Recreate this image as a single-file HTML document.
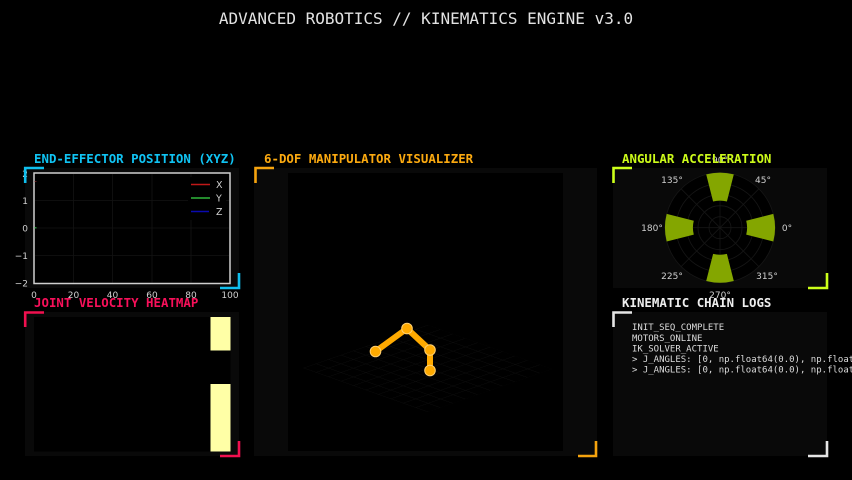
<!DOCTYPE html>
<html><head><meta charset="utf-8"><style>
html,body{margin:0;padding:0;background:#000;width:852px;height:480px;overflow:hidden}
svg{position:absolute;left:0;top:0;display:block;filter:blur(.3px)}
text{font-family:"DejaVu Sans",sans-serif}
.m{font-family:"DejaVu Sans Mono","Liberation Mono",monospace}
.h{font-family:"DejaVu Sans Mono","Liberation Mono",monospace;font-weight:700;font-size:12.42px}
.l{font-size:9px;fill:#dcdcdc;font-family:"DejaVu Sans Mono","Liberation Mono",monospace}
</style></head><body>
<svg width="852" height="480" viewBox="0 0 852 480" xmlns="http://www.w3.org/2000/svg">
<defs>
<pattern id="g" width="10" height="10" patternUnits="userSpaceOnUse"><path d="M0 0H10M0 0V10" stroke="#0e0e0e" stroke-width="1" fill="none"/></pattern>
</defs>
<rect width="852" height="480" fill="#000"/>
<text x="426" y="24" text-anchor="middle" class="m" font-size="16" fill="#e2e2e2">ADVANCED ROBOTICS // KINEMATICS ENGINE v3.0</text>

<!-- panels -->
<rect x="25" y="168" width="214" height="120" fill="#090909"/>
<rect x="25" y="312" width="214" height="144" fill="#090909"/>
<rect x="254" y="168" width="343" height="288" fill="#090909"/>
<rect x="613" y="168" width="214" height="120" fill="#090909"/>
<rect x="613" y="312" width="214" height="144" fill="#090909"/>

<!-- position chart -->
<rect x="34" y="173" width="196" height="110.500" fill="#000"/>
<g stroke="#131313" stroke-width="0.8">
<path d="M73.500 174V283M112.500 174V283M152 174V283M191 174V283"/>
<path d="M35 200.500H229M35 228H229M35 255.500H229"/>
</g>
<rect x="34" y="173" width="196" height="110.500" fill="none" stroke="#cfcfcf" stroke-width="1.500"/>
<rect x="34.500" y="227" width="2" height="1.500" fill="#2a8a3a"/>
<rect x="34.500" y="181" width="2" height="1" fill="#602020"/>
<g text-anchor="middle" style="font-size:9px;fill:#d0d0d0">
<text x="34" y="298">0</text><text x="73.500" y="298">20</text><text x="112.500" y="298">40</text><text x="152" y="298">60</text><text x="191" y="298">80</text><text x="230" y="298">100</text>
</g>
<g style="font-size:9px;fill:#d0d0d0" text-anchor="end">
<text x="28" y="177">2</text><text x="28" y="204">1</text><text x="28" y="231.500">0</text><text x="28" y="259">−1</text><text x="28" y="286.500">−2</text>
</g>
<rect x="188" y="177" width="38" height="43" fill="#000"/>
<path d="M191 184.500H210" stroke="#c01818" stroke-width="1.600"/>
<path d="M191 198H210" stroke="#2fb83a" stroke-width="1.600"/>
<path d="M191 211.500H209" stroke="#0a0ab0" stroke-width="1.600"/>
<g style="font-size:9.500px;fill:#d0d0d0"><text x="216" y="188">X</text><text x="216" y="201.500">Y</text><text x="216" y="215">Z</text></g>

<!-- heatmap -->
<rect x="34" y="317" width="196.500" height="134.500" fill="#000"/>
<rect x="210.500" y="317" width="20" height="33.500" fill="#ffffa6"/>
<rect x="210.500" y="384" width="20" height="67.500" fill="#ffffa6"/>

<!-- center viewport -->
<rect x="288" y="173" width="275" height="278" fill="#000"/>
<g transform="matrix(1.245,-0.43,1.245,0.44,303,368)"><rect x="0" y="0" width="100" height="100" fill="url(#g)"/></g>
<path d="M375.500 351.500L407 328.500L430 350V370.500" fill="none" stroke="#ffaa00" stroke-width="6" stroke-linejoin="round"/>
<g fill="#ffaa00" stroke="#ffcf70" stroke-width="1">
<circle cx="375.500" cy="351.500" r="5.300"/><circle cx="407" cy="328.500" r="5.300"/><circle cx="430" cy="350" r="5.300"/><circle cx="430" cy="370.500" r="5.300"/>
</g>

<!-- polar -->
<g transform="translate(720,227.700)">
<circle r="55" fill="#000"/>
<g fill="none" stroke="#161616" stroke-width="0.8">
<circle r="11"/><circle r="22"/><circle r="33"/><circle r="44"/><circle r="55"/>
<path d="M-55 0H55M0 -55V55M-38.900 -38.900L38.900 38.900M-38.900 38.900L38.900 -38.900"/>
</g>
<g fill="#84a600">
<path d="M26.200 -6.900L53.300 -13.800A55 55 0 0 1 53.300 13.800L26.200 6.900A27 27 0 0 0 26.200 -6.900Z"/>
<path transform="rotate(90)" d="M26.200 -6.900L53.300 -13.800A55 55 0 0 1 53.300 13.800L26.200 6.900A27 27 0 0 0 26.200 -6.900Z"/>
<path transform="rotate(180)" d="M26.200 -6.900L53.300 -13.800A55 55 0 0 1 53.300 13.800L26.200 6.900A27 27 0 0 0 26.200 -6.900Z"/>
<path transform="rotate(270)" d="M26.200 -6.900L53.300 -13.800A55 55 0 0 1 53.300 13.800L26.200 6.900A27 27 0 0 0 26.200 -6.900Z"/>
</g>
</g>
<g style="font-size:9px;fill:#d0d0d0" text-anchor="middle">
<text x="720" y="163">90°</text><text x="763" y="183">45°</text><text x="672" y="183">135°</text>
<text x="787" y="231">0°</text><text x="652" y="231">180°</text>
<text x="672" y="279">225°</text><text x="767" y="279">315°</text><text x="720" y="298">270°</text>
</g>

<!-- logs -->
<text class="l" x="632" y="330">INIT_SEQ_COMPLETE</text>
<text class="l" x="632" y="341">MOTORS_ONLINE</text>
<text class="l" x="632" y="351.500">IK_SOLVER_ACTIVE</text>
<text class="l" x="632" y="362">&gt; J_ANGLES: [0, np.float64(0.0), np.float64(0.0), np.float64(0.0)]</text>
<text class="l" x="632" y="372.500">&gt; J_ANGLES: [0, np.float64(0.0), np.float64(0.0), np.float64(0.0)]</text>

<!-- headings -->
<text class="h" x="34" y="163" fill="#10c4f4">END-EFFECTOR POSITION (XYZ)</text>
<text class="h" x="34" y="307" fill="#f8105a">JOINT VELOCITY HEATMAP</text>
<text class="h" x="264" y="163" fill="#fcaa10">6-DOF MANIPULATOR VISUALIZER</text>
<text class="h" x="622" y="163" fill="#ccfa1a">ANGULAR ACCELERATION</text>
<text class="h" x="622" y="307" fill="#eeeeee">KINEMATIC CHAIN LOGS</text>

<!-- corners -->
<g fill="none" stroke-width="2.600">
<path d="M25.200 183V168H44M239 273V288H220" stroke="#10bfee"/>
<path d="M25.200 327V312.500H44M239 441V456H220" stroke="#f0104f"/>
<path d="M255.500 183V168H274M596 441V456H578" stroke="#f5a30e"/>
<path d="M613.500 183V168H632M827 273V288H808" stroke="#ccff1a"/>
<path d="M613.500 327V312.500H632M827 441V456H808" stroke="#e6e6e6"/>
</g>
</svg>
</body></html>
